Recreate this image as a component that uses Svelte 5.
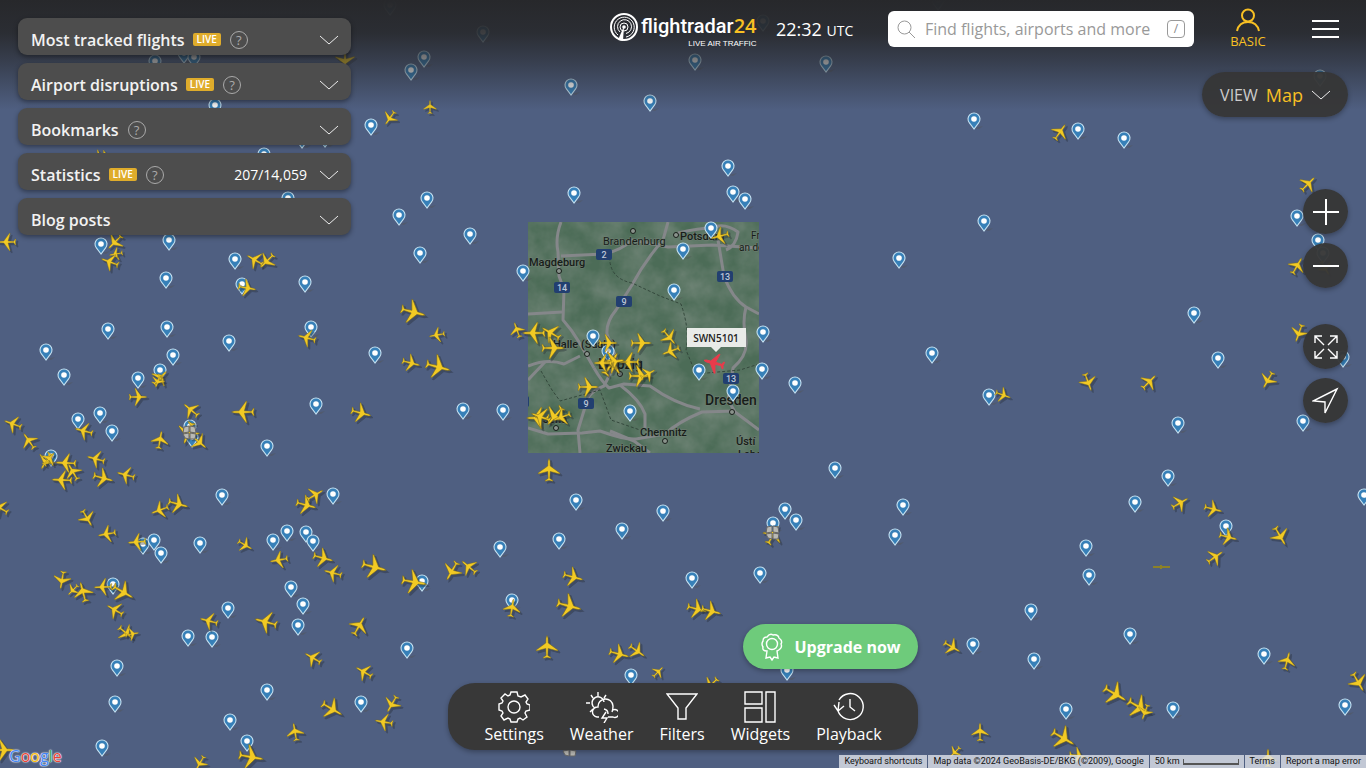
<script lang="ts">
  const panels = [
    { title: 'Most tracked flights', live: true, help: true, value: '' },
    { title: 'Airport disruptions', live: true, help: true, value: '' },
    { title: 'Bookmarks', live: false, help: true, value: '' },
    { title: 'Statistics', live: true, help: true, value: '207/14,059' },
    { title: 'Blog posts', live: false, help: false, value: '' },
  ];

  const tools = ['Settings', 'Weather', 'Filters', 'Widgets', 'Playback'];

  // Airport pins, x / y of the pin centre
  const airports = [
    [390, 6], [483, 33], [763, 22], [938, 1], [424, 58], [411, 71], [155, 62], [184, 54], [194, 58],
    [695, 61], [826, 63], [571, 86], [650, 102], [974, 120], [1320, 77], [215, 106], [371, 126],
    [1078, 130], [1124, 139], [264, 155], [302, 139], [325, 138], [728, 167], [733, 193], [745, 200],
    [574, 194], [288, 199], [427, 199], [399, 216], [984, 222], [470, 235], [1297, 217], [1318, 241],
    [1323, 254], [101, 245], [169, 241], [235, 260], [420, 254], [523, 272], [711, 229], [683, 250], [899, 259],
    [166, 279], [242, 285], [305, 283], [674, 291], [1194, 314], [108, 330], [167, 328], [311, 328],
    [229, 342], [593, 337], [608, 352], [763, 333], [46, 351], [173, 356], [375, 354], [932, 354],
    [64, 376], [138, 379], [160, 371], [699, 371], [762, 370], [795, 384], [733, 392], [1218, 359],
    [1343, 358], [316, 405], [463, 410], [503, 411], [630, 412], [989, 396], [78, 420], [100, 414],
    [112, 432], [190, 427], [192, 438], [1178, 424], [1303, 422], [267, 447], [51, 457], [835, 469],
    [1168, 477], [222, 496], [333, 495], [576, 501], [903, 506], [1135, 503], [1364, 496], [663, 512],
    [785, 510], [796, 521], [773, 524], [1226, 527], [895, 536], [287, 532], [306, 533], [313, 542],
    [273, 541], [200, 544], [154, 541], [143, 545], [161, 554], [622, 530], [559, 540], [500, 548],
    [1086, 547], [1089, 576], [760, 574], [692, 579], [113, 585], [291, 588], [303, 605], [298, 626],
    [228, 609], [188, 637], [212, 638], [422, 582], [512, 601], [1031, 611], [1130, 635], [973, 645],
    [1034, 660], [1264, 655], [407, 649], [117, 667], [115, 703], [267, 691], [631, 676], [787, 671],
    [230, 721], [247, 742], [361, 703], [102, 747], [1066, 710], [1173, 709], [1345, 706],
  ];

  // x, y, heading in degrees, scale
  const planes = [
    [345, 60, 180, 0.9], [100, 156, 230, 0.6], [390, 118, 215, 0.7], [430, 107, 0, 0.6], [1060, 132, 35, 0.8], [1308, 184, 45, 0.8],
    [1297, 266, 30, 0.8], [1299, 333, 200, 0.8], [1325, 268, 150, 0.7], [7, 242, 270, 0.8], [115, 242, 225, 0.8], [116, 254, 260, 0.6],
    [110, 262, 290, 0.8], [255, 260, 300, 0.8], [267, 261, 225, 0.8], [247, 288, 100, 0.8],
    [307, 338, 285, 0.8], [160, 378, 45, 0.8], [158, 381, 200, 0.6], [138, 397, 90, 0.8],
    [191, 410, 310, 0.8], [243, 412, 270, 1], [13, 424, 290, 0.8], [29, 441, 325, 0.8],
    [84, 431, 285, 0.8], [160, 440, 10, 0.8], [199, 442, 130, 0.8], [188, 433, 200, 1],
    [46, 461, 210, 0.8], [49, 459, 40, 0.7], [66, 463, 272, 0.9], [73, 472, 330, 0.8],
    [62, 480, 272, 0.9], [96, 459, 285, 0.8], [103, 478, 105, 0.9], [126, 475, 285, 0.8],
    [0, 508, 300, 0.8], [87, 518, 150, 0.8], [107, 534, 260, 0.8], [160, 510, 250, 0.8],
    [178, 504, 105, 0.9], [137, 542, 265, 0.8], [245, 545, 120, 0.7], [279, 560, 260, 0.8],
    [323, 558, 105, 0.9], [333, 573, 285, 0.8], [306, 505, 105, 0.9], [315, 495, 60, 0.8],
    [62, 580, 190, 0.8], [73, 590, 225, 0.6], [83, 592, 345, 0.9], [103, 587, 268, 0.8],
    [123, 592, 120, 1], [115, 610, 300, 0.8], [126, 633, 130, 0.8], [132, 634, 80, 0.6],
    [209, 621, 285, 0.8], [266, 622, 285, 1], [313, 658, 300, 0.8], [332, 709, 120, 1],
    [295, 732, 350, 0.8], [251, 757, 100, 1.1], [200, 763, 210, 0.7], [3, 750, 90, 1],
    [413, 312, 105, 1.1], [437, 335, 260, 0.7], [411, 363, 105, 0.8], [438, 367, 105, 1.1],
    [361, 413, 105, 0.9], [549, 470, 0, 1], [374, 567, 105, 1.1], [414, 582, 100, 1.1],
    [452, 571, 210, 0.9], [469, 567, 310, 0.8], [359, 626, 30, 0.9], [573, 577, 105, 0.9],
    [569, 606, 105, 1.1], [512, 608, 10, 0.8], [547, 647, 0, 1], [364, 672, 300, 0.8],
    [392, 704, 210, 0.8], [384, 722, 280, 0.8], [619, 654, 105, 0.9], [637, 651, 125, 0.8],
    [658, 672, 45, 0.6], [711, 685, 225, 0.8], [697, 609, 105, 0.9], [711, 611, 105, 0.9],
    [952, 647, 120, 0.8], [1180, 503, 60, 0.8], [1213, 509, 105, 0.8], [1228, 537, 105, 0.8],
    [1280, 536, 150, 0.9], [1215, 557, 55, 0.8], [1115, 694, 120, 1.1], [1139, 707, 120, 1.1],
    [1145, 712, 200, 0.7], [1063, 738, 120, 1.1], [1287, 661, 15, 0.8], [1358, 682, 150, 0.9],
    [980, 732, 0, 0.8], [955, 752, 225, 0.6], [1078, 756, 100, 0.8], [1268, 758, 0, 0.8],
    [1268, 380, 210, 0.8], [1088, 382, 160, 0.8], [1149, 382, 45, 0.8], [1003, 395, 110, 0.7],
    [517, 330, 340, 0.7], [534, 333, 270, 1], [551, 333, 300, 0.9], [553, 348, 90, 1],
    [608, 343, 90, 0.8], [641, 343, 90, 0.9], [669, 337, 140, 0.8], [671, 351, 250, 0.8],
    [629, 362, 270, 0.9], [611, 364, 30, 1.1], [613, 362, 80, 1], [603, 363, 270, 0.8],
    [640, 376, 90, 1], [648, 374, 60, 0.7], [588, 387, 90, 0.9], [538, 418, 270, 1],
    [541, 417, 290, 0.9], [555, 416, 220, 1], [562, 417, 250, 0.8], [720, 236, 255, 0.8],
    [773, 535, 30, 0.9],
  ];

  const stations = [[190, 433], [773, 533], [570, 750]];

  const towns = [
    { name: 'Magdeburg', x: 529, y: 266, size: 11, dot: [559, 271] },
    { name: 'Brandenburg', x: 603, y: 245, size: 11, dot: [633, 231], light: true },
    { name: 'Potsdam', x: 680, y: 240, size: 11, dot: [676, 235] },
    { name: 'Fr', x: 751, y: 239, size: 10, light: true },
    { name: 'an de', x: 739, y: 251, size: 10, light: true },
    { name: 'Halle (Saale)', x: 553, y: 348, size: 11, dot: [587, 354] },
    { name: 'Leipzig', x: 598, y: 369, size: 14, dot: [620, 374] },
    { name: 'Jena', x: 543, y: 423, size: 11, dot: [556, 428] },
    { name: 'Dresden', x: 705, y: 405, size: 14, dot: [732, 412] },
    { name: 'Chemnitz', x: 640, y: 436, size: 11, dot: [665, 441] },
    { name: 'Zwickau', x: 606, y: 452, size: 11 },
    { name: 'Ústí', x: 736, y: 445, size: 11 },
    { name: 'Labem', x: 738, y: 458, size: 11 },
  ];

  const shields = [[604, 254, '2'], [562, 287, '14'], [624, 301, '9'], [725, 276, '13'], [731, 378, '13'], [586, 403, '9'], [521, 401, '']];

  const roads = [
    'M561 222 Q555 238 558 252 L559 276 L564 290 L563 320 Q572 330 579 342 L594 368',
    'M668 222 L663 240 Q644 262 632 285 L616 310 Q606 322 607 334 L617 360 L604 386 Q588 392 586 404 L578 430 L580 453',
    'M561 256 L604 254 Q622 250 632 240 L668 247 L712 245 L759 248',
    'M718 240 L724 276 Q732 298 746 307 L759 314',
    'M746 307 Q742 322 746 340 Q748 355 733 368 L728 400 L735 412 L759 430',
    'M528 314 L562 312', 'M528 366 Q548 358 564 364 L580 356',
    'M528 428 L548 434 L582 433 L600 431 Q625 440 636 439 L665 434 Q678 422 702 412 L735 411',
    'M594 368 Q602 382 609 388 L624 384 L650 386 Q675 404 700 409',
    'M620 385 Q640 400 645 414 L645 428', 'M610 431 L634 441 L650 453',
    'M528 380 L545 362', 'M678 233 Q700 228 712 228 Q724 222 738 232 Q736 246 726 250',
  ];

  const toolIcons: Record<string, string> = {
    Filters: 'M1 3H31L20 17V28H12V17Z',
    Widgets: 'M1 1H18V13H1ZM1 17H18V31H1ZM22 1H31V31H22Z',
    Playback: 'M5 20A13 13 0 1 0 6 9M1 14L5 20L11 15M5 20L6 11M17 8V16L22 20',
    Settings:
      'M13 1H19L20 5L23 6L27 4L30 8L28 11L29 13L32 14V19L28 20L27 22L29 26L25 29L22 27L20 28L19 31H13L12 28L10 27L6 29L3 25L5 22L4 20L1 19V13L4 12L5 10L3 7L7 3L10 5L12 4ZM22 16A6 6 0 1 0 10 16A6 6 0 1 0 22 16',
    Weather:
      'M9 17A6 6 0 1 1 18 11M12 1V5M5 4L7 7M0 12H4M4 21L7 18M20 4L18 7M13 26H11A5 5 0 0 1 12 16A7 7 0 0 1 27 15Q27 19 26 21M27 19A4 4 0 1 1 27 26H22M18 18A5 5 0 0 1 22 23M20 21L16 27H21L18 32',
  };
</script>

{#snippet chevron()}
  <svg class="chevron" width="18" height="10" viewBox="0 0 18 10"><path d="M0 1L9 9L18 1" /></svg>
{/snippet}

<div class="app">
  <svg class="map" width="100%" height="100%" aria-label="Map">
    <defs>
      <symbol id="plane" viewBox="-12 -12 24 24" overflow="visible">
        <path d="M0-11.5L1-9L1.2-4L10.8 3V4L1.2 1.4L.8 8.4L3.8 10.3V11.2L0 10.5L-3.8 11.2V10.3L-.8 8.4L-1.2 1.4L-10.8 4V3L-1.2-4L-1-9Z" />
      </symbol>
      <symbol id="pin" viewBox="-8 -9 16 18" overflow="visible">
        <path d="M1 7L9 5L5 8Z" fill="#555" opacity=".45" />
        <path d="M0 8L-4.6 1.8A6 6 0 1 1 4.6 1.8Z" fill="#3780b8" stroke="#c6e2f2" stroke-width="1.1" />
        <circle cy="-2" r="2.8" fill="#fff" />
      </symbol>
      <clipPath id="tile"><rect x="528" y="222" width="231" height="231" /></clipPath>
      <filter id="terrain" x="0" y="0" width="100%" height="100%">
        <feTurbulence type="fractalNoise" baseFrequency="0.04" numOctaves="4" seed="8" />
        <feColorMatrix values="0 0 0 0 .3  0 0 0 0 .34  0 0 0 0 .31  1.2 0 0 0 -.3" />
      </filter>
    </defs>

    <g clip-path="url(#tile)">
      <rect x="528" y="222" width="231" height="231" fill="#4c6c57" />
      <rect x="528" y="222" width="231" height="231" filter="url(#terrain)" opacity=".6" />
      {#each roads as d}
        <path class="road" {d} />
      {/each}
      <path class="border" d="M610 252Q607 278 632 283L660 296L681 304Q690 330 686 350L696 374L740 370L759 364M541 371L552 390L560 401L600 390L611 420L640 430" />
      {#each shields as [x, y, label]}
        <rect x={Number(x) - 8} y={Number(y) - 5} width="16" height="11" rx="2" fill="#223f70" />
        <text class="shield" {x} y={Number(y) + 4}>{label}</text>
      {/each}
      {#each towns as town}
        <text class="town" class:light={town.light} x={town.x} y={town.y} font-size={town.size}>{town.name}</text>
        {#if town.dot}
          <circle class="dot" cx={town.dot[0]} cy={town.dot[1]} r="2.5" />
        {/if}
      {/each}
    </g>

    {#each airports as [x, y]}
      <use href="#pin" x={x - 8} y={y - 8} width="16" height="18" />
    {/each}
    {#each planes as [x, y, heading, scale]}
      <g class="shadow" transform="translate({x + 2} {y + 2}) rotate({heading}) scale({scale})">
        <use href="#plane" x="-12" y="-12" width="24" height="24" />
      </g>
      <g class="plane" transform="translate({x} {y}) rotate({heading}) scale({scale})">
        <use href="#plane" x="-12" y="-12" width="24" height="24" />
      </g>
    {/each}
    <path d="M1153 567H1170M1161 565V569" stroke="#8c8128" stroke-width="2" />
    {#each stations as [x, y]}
      <g class="station" transform="translate({x} {y})">
        <path d="M-6-6L-1-7V-1L-7 0ZM0-7L5-6L6 0L0-1ZM-7 1L-1 0V6L-5 5ZM0 0L6 1L5 6L0 6Z" />
      </g>
    {/each}
    <g class="selected" transform="translate(714 363) rotate(285) scale(.9)">
      <use href="#plane" x="-12" y="-12" width="24" height="24" />
    </g>
    <path d="M687 328H746V347H721L716 352L711 347H687Z" fill="#e9ebe8" />
    <text class="callsign" x="716" y="342">SWN5101</text>
  </svg>

  <div class="shade"></div>

  <div class="overlay">
    <aside class="panels">
      {#each panels as panel}
        <button class="panel">
          <span class="title">{panel.title}</span>
          {#if panel.live}<span class="live">LIVE</span>{/if}
          {#if panel.help}<span class="help">?</span>{/if}
          <span class="value">{panel.value}</span>
          {@render chevron()}
        </button>
      {/each}
    </aside>

    <a class="logo" href="/">
      <svg width="30" height="30" viewBox="0 0 30 30">
        <circle cx="15" cy="15" r="13" fill="none" stroke="#fff" stroke-width="2" />
        <g fill="none" stroke="#fff">
          <path d="M9 23A10 10 0 1 1 17 25" />
          <path d="M11 20A7 7 0 1 1 17 21.5" />
          <circle cx="15" cy="15" r="4" />
        </g>
        <path d="M15 14L9 28L14 29Z" fill="#fff" />
        <circle cx="15" cy="15" r="1.8" fill="#fff" />
      </svg>
      <span class="wordmark">
        <span class="name">flightradar<b>24</b></span>
        <small>LIVE AIR TRAFFIC</small>
      </span>
    </a>

    <div class="right">
      <header class="bar">
        <time class="clock">22:32 <small>UTC</small></time>
        <label class="search">
          <svg width="19" height="19" viewBox="0 0 19 19"><circle cx="7.5" cy="7.5" r="6.5" /><path d="M12 12L18 18" /></svg>
          <input type="text" placeholder="Find flights, airports and more" aria-label="Search" />
          <kbd>/</kbd>
        </label>
        <button class="account">
          <svg width="24" height="24" viewBox="0 0 24 24"><circle cx="12" cy="7.5" r="6" /><path d="M1 23Q3 14 12 14Q21 14 23 23" /></svg>
          BASIC
        </button>
        <button class="menu" aria-label="Menu">
          <svg width="27" height="20" viewBox="0 0 27 20"><path d="M0 2H27M0 10H27M0 18H27" /></svg>
        </button>
      </header>

      <button class="view">VIEW <b>Map</b> {@render chevron()}</button>

      <div class="controls">
        <button aria-label="Zoom in"><svg viewBox="0 0 28 28"><path d="M1 14H27M14 1V27" /></svg></button>
        <button aria-label="Zoom out"><svg viewBox="0 0 28 28"><path d="M1 14H27" /></svg></button>
      </div>
      <div class="controls second thin">
        <button aria-label="Full screen">
          <svg viewBox="0 0 28 28"><path d="M3 10V3H10M18 3H25V10M25 18V25H18M10 25H3V18M3 3L12 12M25 3L16 12M25 25L16 16M3 25L12 16" /></svg>
        </button>
        <button aria-label="My location"><svg viewBox="0 0 28 28"><path d="M25 2L1 14L13 15L13 26Z" /></svg></button>
      </div>
    </div>
  </div>

  <div class="bottom">
    <button class="upgrade">
      <svg width="22" height="28" viewBox="0 0 22 28">
        <circle cx="11" cy="11" r="5.5" />
        <path d="M6 18Q1 18 2 14Q0 11 2 8Q2 4 6 4Q9 0 12 2Q17 1 18 5Q22 8 20 11Q22 15 16 18L17 25L13 24L11 27L9 24L5 25Z" />
      </svg>
      Upgrade now
    </button>
    <nav class="dock">
      {#each tools as tool}
        <button>
          <svg width="32" height="32" viewBox="0 0 32 32"><path d={toolIcons[tool]} /></svg>
          {tool}
        </button>
      {/each}
    </nav>
  </div>

  <footer class="credits">
    <button>Keyboard shortcuts</button>
    <span>Map data ©2024 GeoBasis-DE/BKG (©2009), Google</span>
    <span class="scale">50 km <i></i></span>
    <a href="/terms">Terms</a>
    <a href="/report">Report a map error</a>
  </footer>
  <a class="google" href="/maps">
    <span class="b">G</span><span class="r">o</span><span class="y">o</span><span class="b">g</span><span class="g">l</span><span class="r">e</span>
  </a>
</div>

<style>
  :global(body) {
    margin: 0;
    background: #4f5f81;
  }
  .app {
    position: relative;
    display: flex;
    flex-direction: column;
    min-height: 100vh;
    overflow: hidden;
    background: #4f5f81;
    color: #fff;
    font-family: 'Open Sans', 'Noto Sans', sans-serif;
  }
  button,
  input {
    font: inherit;
    color: inherit;
    border: 0;
    padding: 0;
    background: none;
  }
  button {
    cursor: pointer;
  }
  a {
    color: inherit;
    text-decoration: none;
  }
  svg {
    flex: none;
  }

  /* map */
  .map {
    position: absolute;
    inset: 0;
  }
  .plane {
    fill: #f2ca24;
    stroke: #73651f;
    stroke-width: 0.5;
  }
  .selected {
    fill: #e83b4b;
    stroke: #e83b4b;
    stroke-width: 1;
  }
  .shadow {
    fill: #20262e;
    stroke: #20262e;
    opacity: 0.35;
  }
  .station {
    fill: #b9b9b4;
    stroke: #666;
  }
  .road {
    fill: none;
    stroke: #85878a;
    stroke-width: 3;
    stroke-linejoin: round;
  }
  .border {
    fill: none;
    stroke: #34483c;
    stroke-dasharray: 3 2;
  }
  .town {
    font-family: Roboto, sans-serif;
    font-weight: 500;
    fill: #171d19;
    stroke: #718074;
    stroke-width: 1;
    paint-order: stroke;
  }
  .light {
    font-weight: 400;
  }
  .dot {
    fill: #8a938c;
    stroke: #171d19;
  }
  .shield {
    font: 500 9px Roboto, sans-serif;
    fill: #bcc6d8;
    text-anchor: middle;
  }
  .callsign {
    font: 600 10px 'Open Sans', sans-serif;
    fill: #222;
    text-anchor: middle;
  }
  .shade {
    position: absolute;
    inset: 0 0 auto;
    height: 110px;
    background: linear-gradient(#27282b, rgba(39, 40, 43, 0.9) 30%, rgba(39, 40, 43, 0.6) 55%, rgba(39, 40, 43, 0));
  }

  /* top */
  .overlay {
    position: relative;
    flex: 1;
    display: grid;
    grid-template-columns: 1fr auto 1fr;
    align-items: start;
  }
  .panels {
    display: flex;
    flex-direction: column;
    gap: 8px;
    width: 333px;
    padding: 18px 0 0 18px;
  }
  .panel {
    display: flex;
    align-items: center;
    height: 37px;
    padding: 6px 13px 0;
    border-radius: 9px;
    background: #4d4d4d;
    box-shadow: 0 2px 5px rgba(0, 0, 0, 0.4);
  }
  .title {
    font-size: 16px;
    font-weight: 600;
    line-height: 24px;
    color: #f2f2f2;
  }
  .live {
    margin-left: 8px;
    padding: 0 4px;
    border-radius: 2px;
    background: #dfac2b;
    font-size: 10px;
    font-weight: 600;
    line-height: 13px;
  }
  .help {
    width: 16px;
    margin-left: 9px;
    border: 1px solid #aaa;
    border-radius: 50%;
    color: #aaa;
    font-size: 13px;
    line-height: 16px;
  }
  .value {
    margin-left: auto;
    font-size: 14px;
  }
  .chevron {
    margin-left: 13px;
    fill: none;
    stroke: #eee;
  }
  .logo {
    display: flex;
    gap: 2px;
    width: 148px;
    padding-top: 12px;
  }
  .wordmark {
    display: flex;
    flex-direction: column;
    align-items: flex-end;
  }
  .name {
    font-family: Roboto, sans-serif;
    font-size: 20px;
    font-weight: 500;
    line-height: 26px;
    white-space: nowrap;
  }
  .name b {
    color: #f8c023;
    font: 600 20px 'Open Sans', sans-serif;
  }
  .wordmark small {
    font: 8px 'Liberation Sans', sans-serif;
  }
  .right {
    display: flex;
    flex-direction: column;
    align-items: flex-end;
    padding-right: 18px;
  }
  .bar {
    display: flex;
    align-items: center;
    align-self: stretch;
    box-sizing: border-box;
    height: 58px;
    padding: 0 9px 0 19px;
  }
  .clock {
    flex: none;
    width: 77px;
    font-size: 18px;
    white-space: nowrap;
  }
  .clock small {
    font-size: 14px;
  }
  .search {
    flex: 1;
    display: flex;
    align-items: center;
    gap: 9px;
    height: 36px;
    margin: 0 35px;
    padding: 0 9px;
    border-radius: 6px;
    background: #fff;
  }
  .search svg {
    fill: none;
    stroke: #999;
  }
  .search input {
    flex: 1;
    min-width: 0;
    outline: 0;
    color: #333;
    font-size: 16px;
  }
  .search input::placeholder {
    color: #999;
  }
  kbd {
    width: 16px;
    border: 1px solid #999;
    border-radius: 4px;
    color: #888;
    font: 12px/16px 'Open Sans', sans-serif;
    text-align: center;
  }
  .account {
    display: flex;
    flex-direction: column;
    align-items: center;
    width: 38px;
    color: #f8c023;
    font-size: 13px;
    line-height: 18px;
  }
  .account svg {
    fill: none;
    stroke: currentColor;
    stroke-width: 2;
  }
  .menu {
    display: flex;
    margin-left: 45px;
  }
  .menu svg {
    stroke: #fff;
    stroke-width: 2;
  }
  .view {
    display: flex;
    align-items: center;
    height: 45px;
    margin-top: 14px;
    padding: 0 18px;
    border-radius: 23px;
    background: rgba(54, 54, 54, 0.95);
    color: #ccc;
    font-size: 16px;
    box-shadow: 0 2px 5px rgba(0, 0, 0, 0.3);
  }
  .view b {
    margin-left: 8px;
    color: #f8c023;
    font-size: 18px;
    font-weight: 400;
  }
  .view .chevron {
    margin-left: 9px;
  }
  .controls {
    display: flex;
    flex-direction: column;
    gap: 9px;
    margin-top: 72px;
  }
  .second {
    margin-top: 36px;
  }
  .controls button {
    display: grid;
    place-items: center;
    width: 45px;
    height: 45px;
    border-radius: 50%;
    background: rgba(54, 54, 54, 0.96);
    box-shadow: 0 2px 5px rgba(0, 0, 0, 0.3);
  }
  .controls svg {
    width: 28px;
    height: 28px;
    fill: none;
    stroke: #fff;
    stroke-width: 2;
  }
  .controls.thin svg {
    stroke-width: 1.4;
  }

  /* bottom */
  .bottom {
    position: relative;
    display: flex;
    flex-direction: column;
    align-items: flex-end;
    gap: 14px;
    align-self: center;
  }
  .upgrade {
    display: flex;
    align-items: center;
    gap: 12px;
    height: 45px;
    padding: 0 17px 0 18px;
    border-radius: 23px;
    background: #6ecb7b;
    font-size: 16px;
    font-weight: 700;
    box-shadow: 0 2px 5px rgba(0, 0, 0, 0.3);
  }
  .upgrade svg {
    fill: none;
    stroke: #fff;
    stroke-width: 1.4;
  }
  .dock {
    display: flex;
    gap: 26px;
    height: 67px;
    padding: 0 36px;
    border-radius: 27px;
    background: #383838;
    box-shadow: 0 2px 5px rgba(0, 0, 0, 0.3);
  }
  .dock button {
    display: flex;
    flex-direction: column;
    align-items: center;
    padding-top: 8px;
    font-size: 16px;
    line-height: 22px;
  }
  .dock svg {
    fill: none;
    stroke: #fff;
    stroke-width: 1.4;
  }
  .credits {
    position: relative;
    display: flex;
    align-self: flex-end;
    gap: 1px;
    margin-top: 5px;
    color: #111;
    font: 9px/13px Roboto, sans-serif;
  }
  .credits > * {
    padding: 0 5px;
    background: rgba(222, 226, 234, 0.8);
    white-space: nowrap;
  }
  .scale {
    display: flex;
    align-items: center;
    gap: 3px;
  }
  .scale i {
    width: 54px;
    height: 4px;
    border: solid #555;
    border-width: 0 1px 2px;
  }
  .google {
    position: absolute;
    left: 9px;
    bottom: 2px;
    display: flex;
    font: 500 16px/20px 'Open Sans', sans-serif;
    text-shadow: 0 0 1px #fff, 0 0 1px #fff, 0 0 2px #fff;
  }
  .b {
    color: #4285f4;
  }
  .r {
    color: #ea4335;
  }
  .y {
    color: #fbbc05;
  }
  .g {
    color: #34a853;
  }
</style>
